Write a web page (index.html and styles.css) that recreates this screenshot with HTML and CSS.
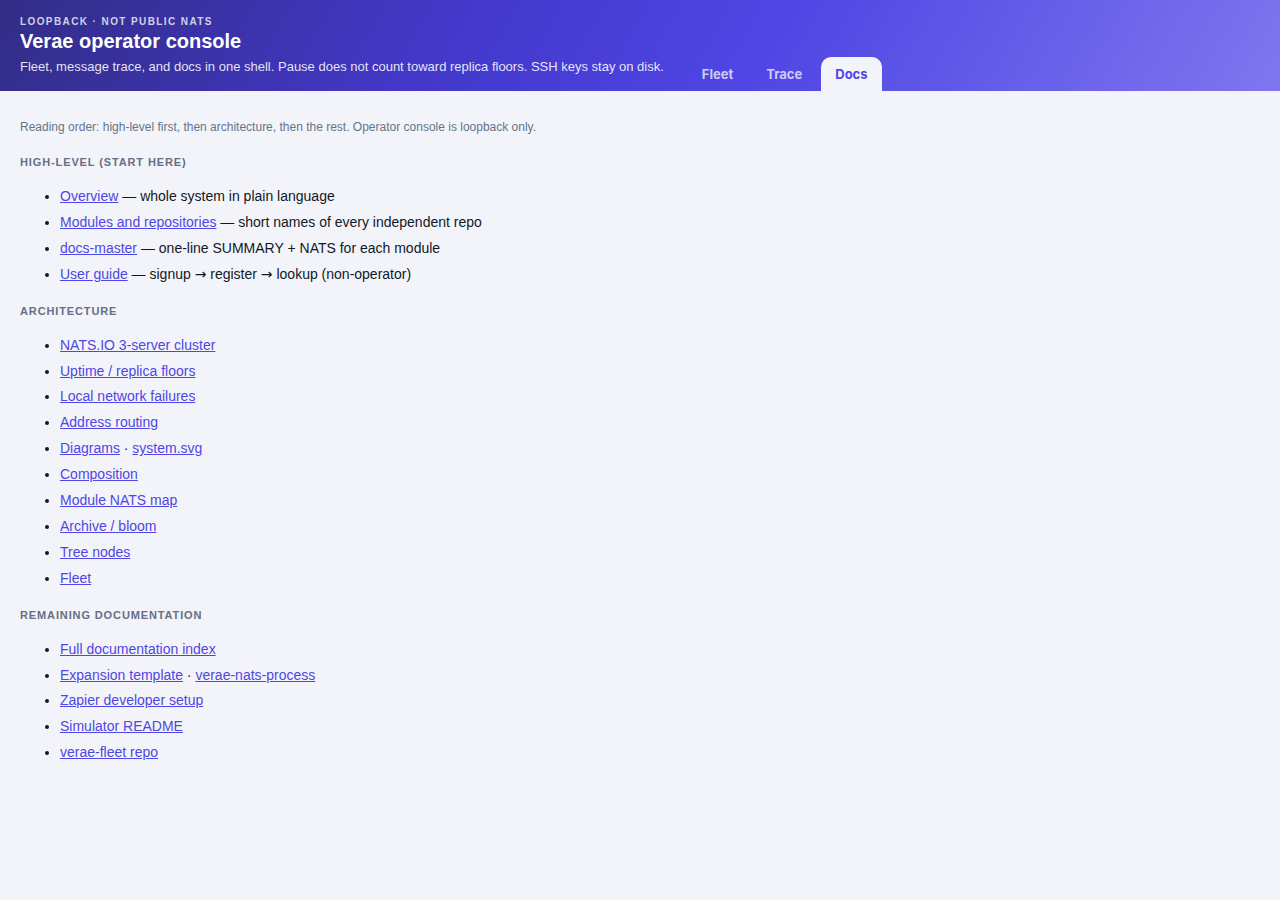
FILE: index.html
```html
<!DOCTYPE html>
<html lang="en">
<head>
<meta charset="utf-8">
<title>Verae operator console</title>
<link rel="stylesheet" href="styles.css">
</head>
<body>
<header class="top">
  <div class="brand">
    <div class="eyebrow">Loopback · not public NATS</div>
    <h1 class="title">Verae operator console</h1>
    <p class="sub">Fleet, message trace, and docs in one shell. Pause does not count toward replica floors. SSH keys stay on disk.</p>
  </div>
  <nav class="tabs">
    <a class="tab" href="#">Fleet</a>
    <a class="tab" href="#">Trace</a>
    <a class="tab active" href="#">Docs</a>
  </nav>
</header>
<main class="docs">
  <p class="intro">Reading order: high-level first, then architecture, then the rest. Operator console is loopback only.</p>

  <h2 class="sec">High-level (start here)</h2>
  <ul class="list">
    <li><a href="#">Overview</a> — whole system in plain language</li>
    <li><a href="#">Modules and repositories</a> — short names of every independent repo</li>
    <li><a href="#">docs-master</a> — one-line SUMMARY + NATS for each module</li>
    <li><a href="#">User guide</a> — signup <span class="arr">→</span> register <span class="arr">→</span> lookup (non-operator)</li>
  </ul>

  <h2 class="sec">Architecture</h2>
  <ul class="list">
    <li><a href="#">NATS.IO 3-server cluster</a></li>
    <li><a href="#">Uptime / replica floors</a></li>
    <li><a href="#">Local network failures</a></li>
    <li><a href="#">Address routing</a></li>
    <li><a href="#">Diagrams</a> · <a href="#">system.svg</a></li>
    <li><a href="#">Composition</a></li>
    <li><a href="#">Module NATS map</a></li>
    <li><a href="#">Archive / bloom</a></li>
    <li><a href="#">Tree nodes</a></li>
    <li><a href="#">Fleet</a></li>
  </ul>

  <h2 class="sec">Remaining documentation</h2>
  <ul class="list">
    <li><a href="#">Full documentation index</a></li>
    <li><a href="#">Expansion template</a> · <a href="#">verae-nats-process</a></li>
    <li><a href="#">Zapier developer setup</a></li>
    <li><a href="#">Simulator README</a></li>
    <li><a href="#">verae-fleet repo</a></li>
  </ul>
</main>
</body>
</html>
```

FILE: styles.css
```css
html, body {
  margin: 0;
  padding: 0;
}
body {
  background: #f3f4f9;
  font-family: "Liberation Sans", Arial, Helvetica, sans-serif;
  color: #111827;
  min-height: 900px;
}
.top {
  display: flex;
  align-items: flex-end;
  gap: 24px;
  height: 91px;
  box-sizing: border-box;
  padding: 15px 20px 0 20px;
  background: linear-gradient(120deg, #322d86 0%, #4338ca 35%, #4f46e5 60%, #7f76ef 100%);
  color: #fff;
}
.brand {
  align-self: flex-start;
}
.eyebrow {
  font-size: 10px;
  line-height: 13px;
  font-weight: 700;
  letter-spacing: 0.14em;
  text-transform: uppercase;
  color: rgba(255, 255, 255, 0.78);
}
.title {
  margin: 0;
  font-size: 20px;
  line-height: 26px;
  font-weight: 700;
  color: #fff;
}
.sub {
  margin: 4px 0 0;
  font-size: 13px;
  line-height: 18px;
  color: rgba(255, 255, 255, 0.88);
}
.tabs {
  display: flex;
  align-items: flex-end;
  gap: 5px;
}
.tab {
  display: block;
  height: 34px;
  line-height: 34px;
  padding: 0 14px;
  font-family: Inter, "Liberation Sans", sans-serif;
  font-size: 13px;
  font-weight: 700;
  color: rgba(255, 255, 255, 0.72);
  text-decoration: none;
  border-radius: 10px 10px 0 0;
}
.tab.active {
  background: #f3f4f9;
  color: #4f46e5;
}
.docs {
  padding: 27px 20px 20px;
}
.intro {
  margin: 0;
  font-size: 12px;
  line-height: 18px;
  color: #64748b;
}
.sec {
  margin: 19px 0 17px;
  font-size: 11px;
  line-height: 14px;
  font-weight: 700;
  letter-spacing: 0.08em;
  text-transform: uppercase;
  color: #666f85;
}
.list {
  margin: 0;
  padding: 0 0 0 40px;
  font-size: 14px;
  line-height: 21px;
  color: #111827;
}
.list li + li {
  margin-top: 4.9px;
}
.list a {
  color: #4f46e5;
  text-decoration: underline;
}
.arr {
  font-family: "DejaVu Sans", sans-serif;
  font-size: 14px;
  line-height: 1;
}
```
